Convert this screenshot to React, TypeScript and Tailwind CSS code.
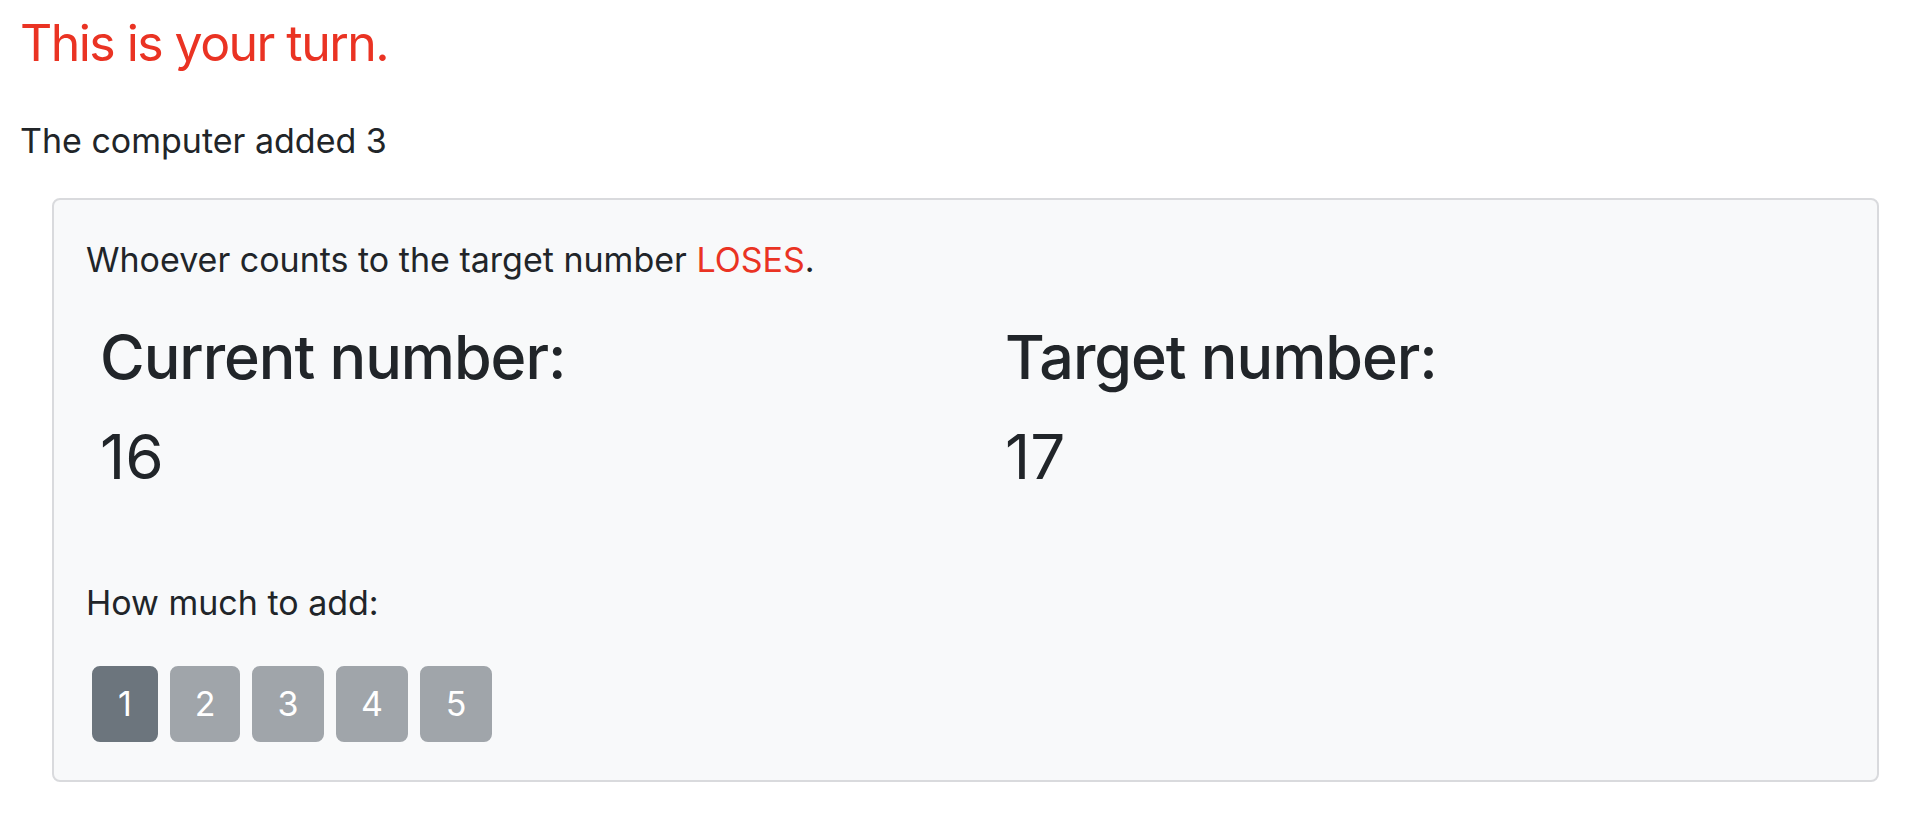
import React from "react";

const choices = [
  { n: 1, w: "w-[66px]" },
  { n: 2, w: "w-[70px]" },
  { n: 3, w: "w-[72px]" },
  { n: 4, w: "w-[72px]" },
  { n: 5, w: "w-[72px]" },
];

export default function App() {
  return (
    <div className="min-h-screen bg-white pl-[20px] pr-[20px] pt-[13px] font-['Inter','Liberation_Sans',sans-serif] text-[#212529]">
      <h3 className="text-[50px] leading-[1.2] font-normal tracking-[-0.031em] text-[#ea3323]">This is your turn.</h3>
      <p className="mt-[42px] text-[34px] leading-[1.5]">The computer added 3</p>

      <div className="ml-[32px] mr-[17px] mt-[32px] rounded-[8px] border-2 border-[#d9dadd] bg-[#f8f9fa] px-[32px] pt-[34px] pb-[38px]">
        <p className="text-[34px] leading-[1.5]">
          Whoever counts to the target number <span className="text-[#ea3323]">LOSES</span>.
        </p>

        <div className="ml-[14px] mt-[36px] grid grid-cols-[905px_1fr]">
          <div>
            <h2 className="text-[61px] leading-[1.2] font-medium tracking-[-0.017em]">Current number:</h2>
            <p className="mt-[26px] text-[62px] leading-[1.2]">16</p>
          </div>
          <div>
            <h2 className="text-[61px] leading-[1.2] font-medium tracking-[-0.017em]">Target number:</h2>
            <p className="mt-[26px] text-[62px] leading-[1.2]">17</p>
          </div>
        </div>

        <p className="mt-[82px] text-[34px] leading-[1.5]">How much to add:</p>

        <div className="mt-[38px] ml-[6px] flex gap-[12px]">
          {choices.map((c) => (
            <button
              key={c.n}
              className={
                c.n === 1
                  ? `h-[76px] ${c.w} rounded-[8px] border-2 border-[#6c757d] bg-[#6c757d] text-[34px] leading-none text-white`
                  : `h-[76px] ${c.w} rounded-[8px] border-2 border-[#a0a5aa] bg-[#a0a5aa] text-[34px] leading-none text-white`
              }
            >
              {c.n}
            </button>
          ))}
        </div>
      </div>
    </div>
  );
}
